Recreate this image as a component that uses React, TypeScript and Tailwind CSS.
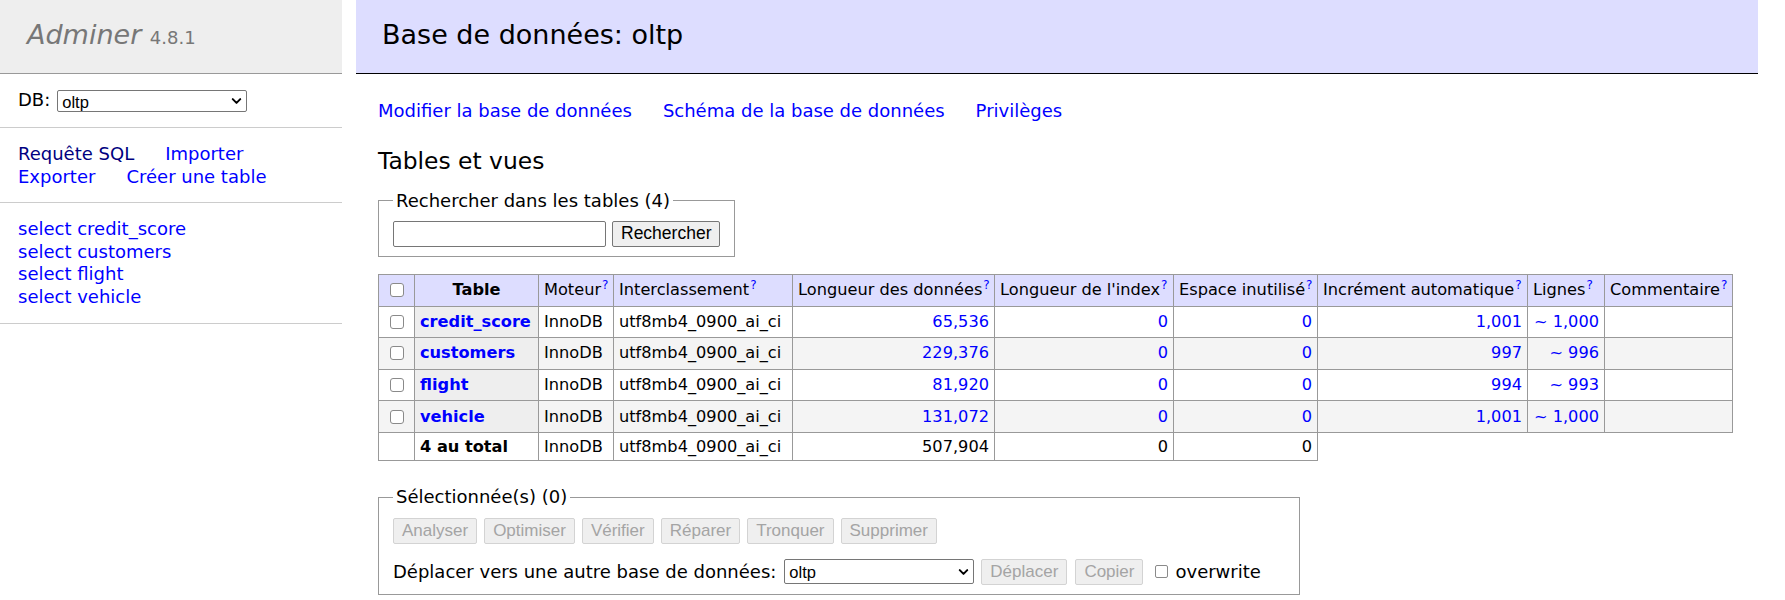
import { ChevronDown } from "lucide-react";

const tables = [
  { name: "credit_score", data: "65,536", index: "0", free: "0", inc: "1,001", lines: "~ 1,000" },
  { name: "customers", data: "229,376", index: "0", free: "0", inc: "997", lines: "~ 996" },
  { name: "flight", data: "81,920", index: "0", free: "0", inc: "994", lines: "~ 993" },
  { name: "vehicle", data: "131,072", index: "0", free: "0", inc: "1,001", lines: "~ 1,000" },
];

const headers = [
  "Moteur",
  "Interclassement",
  "Longueur des données",
  "Longueur de l'index",
  "Espace inutilisé",
  "Incrément automatique",
  "Lignes",
  "Commentaire",
];

const actions = ["Analyser", "Optimiser", "Vérifier", "Réparer", "Tronquer", "Supprimer"];

function Check() {
  return (
    <input
      type="checkbox"
      className="block mx-auto w-[14px] h-[14px] appearance-none rounded-[3px] border-[1.5px] border-[#8a8a8a] bg-white"
    />
  );
}

function DbSelect({ tall }: { tall?: boolean }) {
  return (
    <div className="relative w-[190px]">
      <select
        className={
          tall
            ? "block w-[190px] h-[25px] appearance-none rounded-[2px] border border-[#767676] bg-white pl-[4px] font-['Liberation_Sans',Arial,sans-serif] text-[16.5px] text-black"
            : "block w-[190px] h-[22px] appearance-none rounded-[2px] border border-[#767676] bg-white pl-[4px] font-['Liberation_Sans',Arial,sans-serif] text-[16.5px] text-black"
        }
        defaultValue="oltp"
      >
        <option value="oltp">oltp</option>
      </select>
      {/* native arrow */}
      <ChevronDown
        className="pointer-events-none absolute right-[3px] top-1/2 -translate-y-1/2 w-[15px] h-[15px] text-black"
        strokeWidth={3.2}
      />
    </div>
  );
}

const btnOff =
  "h-[26px] px-[8px] rounded-[2px] border border-[#d3d3d3] bg-[#efefef] text-[#a4a4a4] text-[17px] leading-none font-['Liberation_Sans',Arial,sans-serif]";

export default function App() {
  return (
    <div className="flex min-h-[600px] w-[1785px] bg-white text-black font-['DejaVu_Sans',Verdana,sans-serif] text-[18px] leading-[22.5px]">
      {/* Menu */}
      <aside className="w-[342px] shrink-0">
        <h1 className="h-[74px] border-b border-[#999] bg-[#eee] pl-[27px] pt-[18px] text-[27px] leading-[34px] italic text-[#777]">
          Adminer <span className="not-italic text-[18px]">4.8.1</span>
        </h1>

        <div className="flex h-[54px] items-center gap-[7px] border-b border-[#ccc] px-[18px]">
          <span>DB:</span>
          <DbSelect />
        </div>

        <div className="flex flex-wrap gap-x-[31px] border-b border-[#ccc] px-[18px] pt-[15px] pb-[14px]">
          <a className="text-[#000080]">Requête SQL</a>
          <a className="text-[#0000ff]">Importer</a>
          <a className="text-[#0000ff]">Exporter</a>
          <a className="text-[#0000ff]">Créer une table</a>
        </div>

        <ul className="border-b border-[#ccc] px-[18px] pt-[15px] pb-[14px] leading-[22.7px]">
          {tables.map((t) => (
            <li key={t.name} className="text-[#0000ff]">
              select {t.name}
            </li>
          ))}
        </ul>
      </aside>

      {/* Content */}
      <main className="ml-[14px] w-[1402px]">
        <h2 className="h-[74px] border-b border-black bg-[#ddf] pl-[26px] pt-[18px] text-[27px] leading-[34px]">
          Base de données: oltp
        </h2>

        <div className="pl-[22px]">
          <div className="mt-[26px] flex gap-x-[31px] text-[#0000ff]">
            <a>Modifier la base de données</a>
            <a>Schéma de la base de données</a>
            <a>Privilèges</a>
          </div>

          <h3 className="mt-[24px] text-[23.4px] leading-[29px]">Tables et vues</h3>

          <fieldset className="mt-[14px] block w-fit border border-[#999] px-[14px] pb-[9px] pt-[9px]">
            <legend className="px-[3px]">Rechercher dans les tables (4)</legend>
            <div className="flex gap-[6px]">
              <input
                type="text"
                className="h-[26px] w-[213px] rounded-[2px] border border-[#767676] bg-white"
              />
              <button className="h-[26px] px-[8px] rounded-[2px] border border-[#767676] bg-[#efefef] text-[17.5px] leading-none text-black font-['Liberation_Sans',Arial,sans-serif]">
                Rechercher
              </button>
            </div>
          </fieldset>

          <table className="mt-[17px] w-[1354px] table-fixed border-collapse text-[16.2px] leading-[20.25px]">
            <colgroup>
              <col className="w-[36px]" />
              <col className="w-[124px]" />
              <col className="w-[75px]" />
              <col className="w-[179px]" />
              <col className="w-[202px]" />
              <col className="w-[179px]" />
              <col className="w-[144px]" />
              <col className="w-[210px]" />
              <col className="w-[77px]" />
              <col className="w-[128px]" />
            </colgroup>
            <thead>
              <tr className="h-[31.6px] bg-[#ddf]">
                <td className="border border-[#999] px-[5px] py-[3px]">
                  <Check />
                </td>
                <th className="border border-[#999] px-[5px] py-[3px] text-center font-bold">Table</th>
                {headers.map((h) => (
                  <td key={h} className="whitespace-nowrap border border-[#999] px-[5px] py-[3px] text-left">
                    {h}
                    <sup className="ml-[1px] text-[12px] text-[#0000ff]">?</sup>
                  </td>
                ))}
              </tr>
            </thead>
            <tbody>
              {tables.map((t, i) => (
                <tr key={t.name} className={i % 2 ? "h-[31.6px] bg-[#f4f4f4]" : "h-[31.6px] bg-white"}>
                  <td className="border border-[#999] px-[5px] py-[3px]">
                    <Check />
                  </td>
                  <th className="border border-[#999] bg-[#eee] px-[5px] py-[3px] text-left font-bold text-[#0000ff]">
                    {t.name}
                  </th>
                  <td className="border border-[#999] px-[5px] py-[3px]">InnoDB</td>
                  <td className="border border-[#999] px-[5px] py-[3px]">utf8mb4_0900_ai_ci</td>
                  <td className="border border-[#999] px-[5px] py-[3px] text-right text-[#0000ff]">{t.data}</td>
                  <td className="border border-[#999] px-[5px] py-[3px] text-right text-[#0000ff]">{t.index}</td>
                  <td className="border border-[#999] px-[5px] py-[3px] text-right text-[#0000ff]">{t.free}</td>
                  <td className="border border-[#999] px-[5px] py-[3px] text-right text-[#0000ff]">{t.inc}</td>
                  <td className="border border-[#999] px-[5px] py-[3px] text-right text-[#0000ff]">{t.lines}</td>
                  <td className="border border-[#999] px-[5px] py-[3px]"></td>
                </tr>
              ))}
              <tr className="h-[28.5px] bg-white">
                <td className="border border-[#999] px-[5px] py-[3px]"></td>
                <th className="border border-[#999] px-[5px] py-[3px] text-left font-bold">4 au total</th>
                <td className="border border-[#999] px-[5px] py-[3px]">InnoDB</td>
                <td className="border border-[#999] px-[5px] py-[3px]">utf8mb4_0900_ai_ci</td>
                <td className="border border-[#999] px-[5px] py-[3px] text-right">507,904</td>
                <td className="border border-[#999] px-[5px] py-[3px] text-right">0</td>
                <td className="border border-[#999] px-[5px] py-[3px] text-right">0</td>
              </tr>
            </tbody>
          </table>

          <fieldset className="mt-[25px] block w-[922px] border border-[#999] px-[14px] pb-[9px] pt-[9px]">
            <legend className="px-[3px]">Sélectionnée(s) (0)</legend>
            <div className="flex gap-[7px]">
              {actions.map((a) => (
                <button key={a} disabled className={btnOff}>
                  {a}
                </button>
              ))}
            </div>
            <div className="mt-[15px] flex items-center">
              <span>Déplacer vers une autre base de données:</span>
              <div className="ml-[8px]">
                <DbSelect tall />
              </div>
              <button disabled className={btnOff + " ml-[7px]"}>
                Déplacer
              </button>
              <button disabled className={btnOff + " ml-[8px]"}>
                Copier
              </button>
              <label className="ml-[12px] flex items-center gap-[7px]">
                <input
                  type="checkbox"
                  className="block w-[13px] h-[13px] appearance-none rounded-[2px] border-[1.5px] border-[#8a8a8a] bg-white"
                />
                overwrite
              </label>
            </div>
          </fieldset>
        </div>
      </main>
    </div>
  );
}
